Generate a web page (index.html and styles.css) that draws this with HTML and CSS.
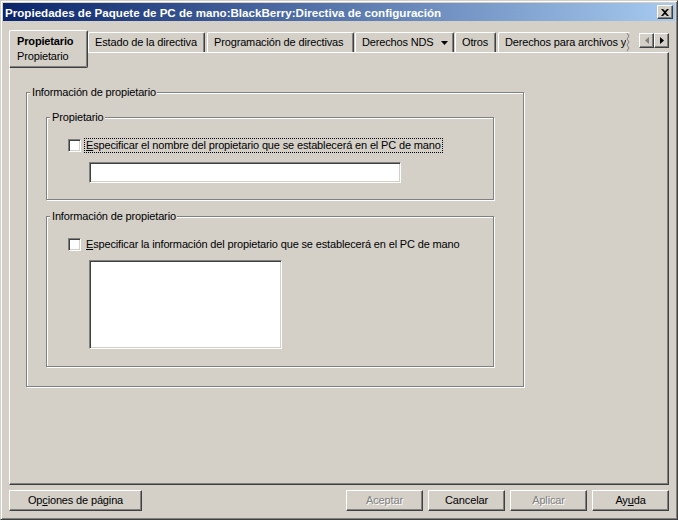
FILE: index.html
```html
<!DOCTYPE html>
<html lang="es">
<head>
    <meta charset="UTF-8">
    <title>Propiedades de Paquete de PC de mano</title>
    <link rel="stylesheet" href="styles.css">
</head>
<body>

    <div class="window">
        <div class="titlebar">
            <span class="title">Propiedades de Paquete de PC de mano:BlackBerry:Directiva de configuración</span>
            <span class="close-btn">
                <svg width="8" height="7" viewBox="0 0 8 7"><path d="M0 0h2l2 2 2-2h2L5 3.5 8 7H6L4 5 2 7H0l3-3.5z" fill="#000"/></svg>
            </span>
        </div>

        <div class="dialog">
            <div class="tabstrip">
                <div class="tab active">
                    <b>Propietario</b>
                    <span>Propietario</span>
                </div>
                <div class="tab tab-estado">Estado de la directiva</div>
                <div class="tab tab-prog">Programación de directivas</div>
                <div class="tab tab-nds">Derechos NDS
                    <svg class="drop" width="7" height="4" viewBox="0 0 7 4"><path d="M0 0h7L3.5 4z" fill="#000"/></svg>
                </div>
                <div class="tab tab-otros">Otros</div>
                <div class="tab tab-arch">Derechos para archivos y
                    <svg class="tear" width="4" height="18" viewBox="0 0 4 18"><path d="M1 0l2 3-2 3 2 3-2 3 2 3-2 3" stroke="#808080" fill="none"/></svg>
                </div>
                <div class="tab-scroll">
                    <span class="sbtn"><svg width="4" height="7" viewBox="0 0 4 7"><path d="M4 0v7L0 3.5z" fill="#808080"/></svg></span>
                    <span class="sbtn"><svg width="4" height="7" viewBox="0 0 4 7"><path d="M0 0v7l4-3.5z" fill="#000"/></svg></span>
                </div>
            </div>

            <div class="panel">
                <div class="group group-outer">
                    <div class="group-label">Información de propietario</div>

                    <div class="group group-name">
                        <div class="group-label">Propietario</div>
                        <div class="check-row">
                            <span class="checkbox"></span>
                            <span class="check-label focused"><u>E</u>specificar el nombre del propietario que se establecerá en el PC de mano</span>
                        </div>
                        <div class="field field-name"></div>
                    </div>

                    <div class="group group-info">
                        <div class="group-label">Información de propietario</div>
                        <div class="check-row">
                            <span class="checkbox"></span>
                            <span class="check-label"><u>E</u>specificar la información del propietario que se establecerá en el PC de mano</span>
                        </div>
                        <div class="field field-info"></div>
                    </div>
                </div>
            </div>

            <div class="buttons">
                <span class="btn btn-wide">Op<u>c</u>iones de página</span>
                <span class="spacer"></span>
                <span class="btn disabled">Aceptar</span>
                <span class="btn">Cancelar</span>
                <span class="btn disabled">Aplicar</span>
                <span class="btn">Ay<u>u</u>da</span>
            </div>
        </div>
    </div>

</body>
</html>
```

FILE: styles.css
```css
      body {
          margin: 0;
          background-color: #d4d0c8;
          font-family: 'Liberation Sans', Arial, sans-serif;
          font-size: 11px;
          letter-spacing: -0.15px;
          color: #000;
      }
      .window {
          box-sizing: border-box;
          width: 678px;
          height: 520px;
          padding: 2px;
          border: 1px solid;
          border-color: #d4d0c8 #404040 #404040 #d4d0c8;
          box-shadow: inset 1px 1px #fff, inset -1px -1px #808080;
          display: flex;
          flex-direction: column;
      }
      .titlebar {
          height: 18px;
          flex: none;
          display: flex;
          align-items: center;
          background: linear-gradient(to right, #0a246a, #a6caf0);
          padding-left: 2px;
          padding-right: 2px;
      }
      .title {
          flex: 1;
          color: #fff;
          font-weight: bold;
          font-size: 11.6px;
          letter-spacing: 0;
          white-space: nowrap;
          overflow: hidden;
      }
      .close-btn {
          box-sizing: border-box;
          width: 16px;
          height: 14px;
          display: flex;
          align-items: center;
          justify-content: center;
          background-color: #d4d0c8;
          border: 1px solid;
          border-color: #fff #404040 #404040 #fff;
          box-shadow: inset -1px -1px #808080;
      }
      .dialog {
          flex: 1;
          display: flex;
          flex-direction: column;
          padding: 8px 6px 6px 6px;
      }

      /* tabs */
      .tabstrip {
          height: 23px;
          flex: none;
          display: flex;
          align-items: flex-start;
      }
      .tab {
          box-sizing: border-box;
          height: 20px;
          margin-top: 3px;
          padding: 2px 0 0 6px;
          line-height: 14px;
          white-space: nowrap;
          overflow: hidden;
          border-top: 1px solid #fff;
          border-left: 1px solid #fff;
          border-right: 1px solid #404040;
          box-shadow: inset -1px 0 #808080;
          border-radius: 2px 2px 0 0;
      }
      .tab.active {
          position: relative;
          z-index: 1;
          width: 79px;
          height: 38px;
          margin-top: 1px;
          padding: 3px 0 0 7px;
          line-height: 15px;
          background-color: #d4d0c8;
          border-bottom: 1px solid #404040;
          box-shadow: inset -1px -1px #808080;
          border-radius: 2px 2px 2px 0;
      }
      .tab.active b, .tab.active span {
          display: block;
      }
      .tab-estado { width: 117px; }
      .tab-prog { width: 147px; margin-left: 2px; }
      .tab-nds { width: 99px; margin-left: 1px; }
      .tab-otros { width: 41px; margin-left: 1px; }
      .tab-arch {
          width: 132px;
          margin-left: 2px;
          position: relative;
          border-right: none;
          box-shadow: none;
          padding-right: 0;
      }
      .drop {
          margin-left: 5px;
          vertical-align: 1px;
      }
      .tear {
          position: absolute;
          top: 0;
          right: 0;
          background-color: #d4d0c8;
      }
      .tab-scroll {
          margin-left: auto;
          margin-top: 4px;
          display: flex;
      }
      .sbtn {
          box-sizing: border-box;
          width: 15px;
          height: 15px;
          display: flex;
          align-items: center;
          justify-content: center;
          border: 1px solid;
          border-color: #fff #404040 #404040 #fff;
          box-shadow: inset -1px -1px #808080;
      }

      /* panel */
      .panel {
          flex: 1;
          box-sizing: border-box;
          padding: 39px 0 0 16px;
          border: 1px solid;
          border-color: #fff #404040 #404040 #fff;
          box-shadow: inset -1px -1px #808080;
      }
      .group {
          box-sizing: border-box;
          border: 1px solid #808080;
          box-shadow: inset 1px 1px #fff, 1px 1px #fff;
      }
      .group-label {
          display: block;
          width: fit-content;
          height: 13px;
          line-height: 13px;
          margin: -7px 0 0 3px;
          padding: 0 1px 0 2px;
          background-color: #d4d0c8;
      }
      .group-outer {
          width: 498px;
          height: 295px;
      }
      .group-name {
          width: 448px;
          height: 83px;
          margin: 18px 0 0 19px;
      }
      .group-info {
          width: 448px;
          height: 151px;
          margin: 16px 0 0 19px;
      }
      .check-row {
          display: flex;
          align-items: center;
          margin: 15px 0 0 21px;
          height: 13px;
      }
      .checkbox {
          box-sizing: border-box;
          width: 13px;
          height: 13px;
          flex: none;
          background-color: #fff;
          border: 1px solid;
          border-color: #808080 #fff #fff #808080;
          box-shadow: inset 1px 1px #404040, inset -1px -1px #d4d0c8;
      }
      .check-label {
          margin-left: 4px;
          padding: 0 1px;
          line-height: 13px;
          white-space: nowrap;
      }
      .focused {
          outline: 1px dotted #000;
      }
      .field {
          box-sizing: border-box;
          background-color: #fff;
          border: 1px solid;
          border-color: #808080 #fff #fff #808080;
          box-shadow: inset 1px 1px #404040, inset -1px -1px #d4d0c8;
          margin-left: 42px;
      }
      .field-name {
          width: 312px;
          height: 21px;
          margin-top: 10px;
      }
      .field-info {
          width: 193px;
          height: 89px;
          margin-top: 9px;
      }

      /* bottom buttons */
      .buttons {
          flex: none;
          display: flex;
          gap: 5px;
          margin-top: 5px;
      }
      .spacer {
          flex: 1;
      }
      .btn {
          box-sizing: border-box;
          width: 77px;
          height: 21px;
          line-height: 19px;
          text-align: center;
          border: 1px solid;
          border-color: #fff #404040 #404040 #fff;
          box-shadow: inset -1px -1px #808080;
      }
      .btn-wide {
          width: 133px;
      }
      .btn.disabled {
          color: #808080;
          text-shadow: 1px 1px #fff;
      }
```
